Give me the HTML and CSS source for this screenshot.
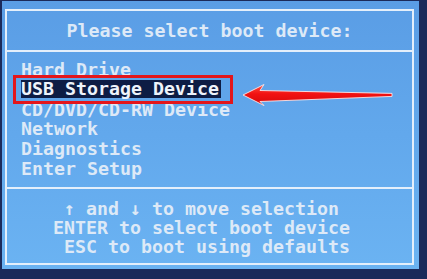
FILE: index.html
```html
<!DOCTYPE html>
<html>
<head>
<meta charset="utf-8">
<link rel="stylesheet" href="styles.css">
</head>
<body>
<div class="screen">
  <div class="frame">
    <div class="header">Please select boot device:</div>
    <div class="menu">
      <div class="item">Hard Drive</div>
      <div class="item"><span class="sel">USB Storage Device</span></div>
      <div class="item">CD/DVD/CD-RW Device</div>
      <div class="item">Network</div>
      <div class="item">Diagnostics</div>
      <div class="item">Enter Setup</div>
    </div>
    <div class="footer">
      <div class="line">↑ and ↓ to move selection</div>
      <div class="line wide">ENTER to select boot device</div>
      <div class="line">ESC to boot using defaults</div>
    </div>
    <div class="redbox"></div>
    <svg class="arrow" width="170" height="30" viewBox="0 0 170 30">
      <defs>
        <linearGradient id="ag" x1="0" y1="0" x2="0" y2="1">
          <stop offset="0" stop-color="#ff5040"/>
          <stop offset="0.45" stop-color="#f21212"/>
          <stop offset="1" stop-color="#d40a0a"/>
        </linearGradient>
      </defs>
      <polygon points="6,14 27,3.5 23,9.5 155,12.4 155,15.4 23,20.5 27,24.5" fill="url(#ag)" stroke="#ffecec" stroke-width="1" stroke-linejoin="round" stroke-opacity="0.85"/>
    </svg>
  </div>
</div>
</body>
</html>
```

FILE: styles.css
```css
html, body {
  margin: 0;
  padding: 0;
}
body {
  background: #1b2a5a;
  width: 427px;
  height: 279px;
  overflow: hidden;
  font-family: "DejaVu Sans Mono", "Liberation Mono", monospace;
  font-weight: bold;
  font-size: 18.27px;
  color: #dde9f7;
}
.screen {
  margin: 1px 8px 0 2px;
  width: 417px;
  height: 268px;
  box-sizing: border-box;
  padding: 8px 5px 4px 3px;
  background: linear-gradient(180deg, #5a9de5 0%, #62a8ec 50%, #6bb3f2 100%);
}
.frame {
  position: relative;
  box-sizing: border-box;
  width: 409px;
  height: 256px;
  border: 2px solid #e4effb;
}
.header {
  box-sizing: border-box;
  padding-top: 10px;
  line-height: 20px;
  text-align: center;
  border-bottom: 2px solid #e4effb;
  height: 41px;
}
.menu {
  padding: 8px 0 0 14px;
  box-sizing: border-box;
  border-bottom: 2px solid #e4effb;
  height: 137px;
}
.item {
  height: 19.8px;
  line-height: 19.8px;
  white-space: pre;
}
.sel {
  display: inline-block;
  vertical-align: top;
  line-height: 18px;
  height: 18px;
  padding: 0 2px 0 0;
  background: #0d1c44;
  color: #eef3fb;
}
.footer {
  padding: 10px 0 0 57px;
}
.line {
  line-height: 19.2px;
  white-space: pre;
}
.line.wide {
  margin-left: -11px;
}
.redbox {
  position: absolute;
  left: 6px;
  top: 64px;
  width: 220px;
  height: 29px;
  box-sizing: border-box;
  border: 3px solid #e3161b;
}
.arrow {
  position: absolute;
  left: 230px;
  top: 70px;
}
```
